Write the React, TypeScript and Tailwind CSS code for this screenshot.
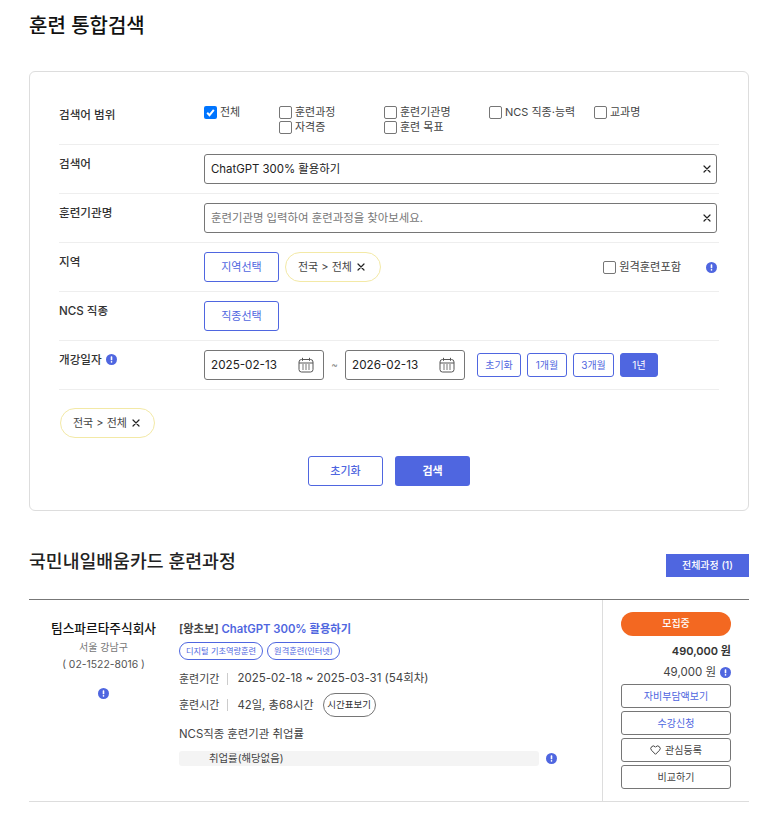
import React from "react";

const Info = ({ className = "" }: { className?: string }) => (
  <svg width="11" height="11" viewBox="0 0 11 11" className={className}>
    <circle cx="5.5" cy="5.5" r="5.5" fill="#4f66e0" />
    <rect x="4.7" y="2.3" width="1.6" height="4" rx="0.6" fill="#fff" />
    <rect x="4.7" y="7.1" width="1.6" height="1.6" rx="0.7" fill="#fff" />
  </svg>
);

const Cross = ({ size = 8 }: { size?: number }) => (
  <svg width={size} height={size} viewBox="0 0 8 8" className="shrink-0">
    <path d="M1 1l6 6M7 1L1 7" stroke="#222" strokeWidth="1.2" strokeLinecap="round" />
  </svg>
);

const Calendar = () => (
  <svg width="16" height="16" viewBox="0 0 16 16" fill="none" className="shrink-0">
    <rect x="1" y="2.5" width="14" height="12.5" rx="2.5" stroke="#555" strokeWidth="1" />
    <path d="M1 6h14" stroke="#555" strokeWidth="1" />
    <path d="M4.5 0.8v3M11.5 0.8v3" stroke="#555" strokeWidth="1" />
    <path d="M4 8h2M7 8h2M10 8h2M4 10h2M7 10h2M10 10h2M4 12h2M7 12h2M10 12h2" stroke="#777" strokeWidth="1" />
  </svg>
);

const Check = ({ label, on = false, textClass = "text-[11px]" }: { label: string; on?: boolean; textClass?: string }) => (
  <label className={`flex items-center gap-[3px] h-[15px] text-[#444] ${textClass}`}>
    {on ? (
      <span className="w-[13px] h-[13px] rounded-[2px] bg-[#0075ff] flex items-center justify-center shrink-0">
        <svg width="11" height="11" viewBox="0 0 10 10" fill="none">
          <path d="M2 5.2l2.1 2.2L8 2.6" stroke="#fff" strokeWidth="1.8" />
        </svg>
      </span>
    ) : (
      <span className="w-[13px] h-[13px] rounded-[2px] border border-[#767676] bg-white shrink-0" />
    )}
    <span className="whitespace-nowrap">{label}</span>
  </label>
);

const Row = ({ label, children }: { label: React.ReactNode; children: React.ReactNode }) => (
  <div className="flex h-[49px] border-b border-[#eeeeee] pt-[9px]">
    <div className="w-[145px] shrink-0 pt-[1px] text-[11.6px] leading-[18px] font-medium text-[#333] flex items-start gap-[4px]">{label}</div>
    <div className="flex-1 min-w-0">{children}</div>
  </div>
);

const OutlineBtn = ({ children, className = "" }: { children: React.ReactNode; className?: string }) => (
  <button className={`h-[30px] rounded-[3px] border border-[#4f66e0] bg-white text-[11px] text-[#4f66e0] ${className}`}>{children}</button>
);

const Chip = ({ className = "pr-[14px]" }: { className?: string }) => (
  <span className={`inline-flex items-center gap-[5px] h-[30px] pl-[12px] rounded-full border border-[#f3e9a6] bg-white text-[11px] text-[#444] ${className}`}>
    전국 &gt; 전체
    <Cross />
  </span>
);

const TextBox = ({ children }: { children: React.ReactNode }) => (
  <div className="w-[513px] h-[30px] rounded-[3px] border border-[#767676] flex items-center justify-between pl-[6px] pr-[5px]">
    {children}
    <Cross />
  </div>
);

const DateBox = ({ value }: { value: string }) => (
  <div className="w-[120px] h-[30px] rounded-[3px] border border-[#767676] flex items-center justify-between pl-[6px] pr-[9px] text-[11.7px] text-[#222]">
    <span className="pt-[1px]">{value}</span>
    <Calendar />
  </div>
);

const SmallBtn = ({ children, className = "" }: { children: React.ReactNode; className?: string }) => (
  <button className={`h-[24px] rounded-[3px] border border-[#4f66e0] text-[10px] ${className}`}>{children}</button>
);

const SideBtn = ({ children, className = "" }: { children: React.ReactNode; className?: string }) => (
  <button className={`w-[110px] h-[24px] rounded-[3px] border border-[#767676] bg-white text-[10px] flex items-center justify-center gap-[4px] ${className}`}>{children}</button>
);

export default function App() {
  return (
    <div className="w-[780px] h-[819px] overflow-hidden bg-white font-[Inter,'Noto_Sans_CJK_KR',sans-serif] text-[#222] px-[29px]">
      <h1 className="pt-[11px] h-[71px] text-[20px] leading-[30px] font-medium text-[#111]">훈련 통합검색</h1>

      <section className="w-[720px] h-[440px] rounded-[6px] border border-[#dddddd] px-[29px] pt-[23px] box-border">
        <div className="flex h-[50px] border-b border-[#eeeeee] pt-[10px]">
          <div className="w-[145px] shrink-0 pt-[1px] text-[11.6px] leading-[18px] font-medium text-[#333]">검색어 범위</div>
          <div className="grid grid-cols-[75px_105px_105px_105px_105px] grid-rows-[15px_15px]">
            <Check label="전체" on />
            <Check label="훈련과정" />
            <Check label="훈련기관명" />
            <Check label="NCS 직종·능력" />
            <Check label="교과명" />
            <span />
            <Check label="자격증" />
            <Check label="훈련 목표" />
          </div>
        </div>

        <Row label="검색어">
          <TextBox>
            <span className="pt-[1px] text-[11.4px] text-[#222]">ChatGPT 300% 활용하기</span>
          </TextBox>
        </Row>
        <Row label="훈련기관명">
          <TextBox>
            <span className="pt-[1px] text-[11.4px] text-[#777]">훈련기관명 입력하여 훈련과정을 찾아보세요.</span>
          </TextBox>
        </Row>
        <Row label="지역">
          <div className="flex items-center w-[513px]">
            <OutlineBtn className="w-[75px] mr-[6px]">지역선택</OutlineBtn>
            <Chip className="pr-[15px]" />
            <div className="ml-auto flex items-center">
              <Check label="원격훈련포함" textClass="text-[11.2px]" />
              <Info className="ml-[25px]" />
            </div>
          </div>
        </Row>
        <Row label="NCS 직종">
          <OutlineBtn className="w-[75px]">직종선택</OutlineBtn>
        </Row>
        <Row
          label={
            <>
              개강일자
              <Info className="mt-[3px]" />
            </>
          }
        >
          <div className="flex items-center">
            <DateBox value="2025-02-13" />
            <span className="w-[21px] -mt-[2px] text-center text-[10px] text-[#888]">~</span>
            <DateBox value="2026-02-13" />
            <div className="flex items-center gap-[6px] ml-[12px]">
              <SmallBtn className="w-[44px] text-[#4f66e0]">초기화</SmallBtn>
              <SmallBtn className="w-[40px] text-[#4f66e0]">1개월</SmallBtn>
              <SmallBtn className="w-[41px] text-[#4f66e0]">3개월</SmallBtn>
              <SmallBtn className="w-[38px] bg-[#4f66e0] text-white">1년</SmallBtn>
            </div>
          </div>
        </Row>

        <div className="pt-[18px] pl-[1px]">
          <Chip />
        </div>
        <div className="flex justify-center gap-[12px] mt-[18px]">
          <OutlineBtn className="w-[75px] font-medium">초기화</OutlineBtn>
          <button className="w-[75px] h-[30px] rounded-[3px] bg-[#4f66e0] text-[11px] font-semibold text-white">검색</button>
        </div>
      </section>

      <div className="flex justify-between items-start w-[720px] h-[89px] border-b border-[#777777] pt-[36px]">
        <h2 className="text-[18.3px] leading-[28px] font-medium text-[#222]">국민내일배움카드 훈련과정</h2>
        <button className="w-[83px] h-[23px] mt-[7px] bg-[#4f66e0] text-[10px] font-medium text-white">전체과정 (1)</button>
      </div>

      <article className="flex w-[720px] h-[202px] border-b border-[#dddddd]">
        <div className="w-[150px] shrink-0 flex flex-col items-center pt-[20px] pr-[1px]">
          <div className="text-[12.7px] leading-[18px] font-medium text-[#111]">팀스파르타주식회사</div>
          <div className="text-[10px] leading-[14px] mt-[2px] text-[#777]">서울 강남구</div>
          <div className="text-[10.4px] leading-[14px] mt-[4px] text-[#555]">( 02-1522-8016 )</div>
          <Info className="mt-[16px]" />
        </div>

        <div className="flex-1 min-w-0 pt-[20px]">
          <div className="text-[11.3px] leading-[18px] font-semibold text-[#444]">
            [왕초보] <span className="text-[#4f66e0]">ChatGPT 300% 활용하기</span>
          </div>
          <div className="flex gap-[4px] mt-[4px]">
            <span className="h-[18px] px-[6px] rounded-full border border-[#4f66e0] text-[8.2px] leading-[16px] text-[#4f66e0]">디지털 기초역량훈련</span>
            <span className="h-[18px] px-[6px] rounded-full border border-[#4f66e0] text-[8.2px] leading-[16px] text-[#4f66e0]">원격훈련(인터넷)</span>
          </div>
          <div className="flex items-center h-[18px] mt-[10px] text-[11px] text-[#444]">
            <span>훈련기간</span>
            <span className="w-px h-[12px] bg-[#ccc] ml-[8px] mr-[9px]" />
            <span className="text-[11.5px]">2025-02-18 ~ 2025-03-31 (54회차)</span>
          </div>
          <div className="flex items-center h-[24px] mt-[5px] text-[11px] text-[#444]">
            <span>훈련시간</span>
            <span className="w-px h-[12px] bg-[#ccc] ml-[8px] mr-[9px]" />
            <span className="text-[11.3px]">42일, 총68시간</span>
            <span className="ml-[9px] h-[24px] w-[53px] text-center rounded-full border border-[#767676] text-[9.5px] leading-[22px] text-[#333]">시간표보기</span>
          </div>
          <div className="text-[11.4px] leading-[18px] mt-[8px] text-[#444]">NCS직종 훈련기관 취업률</div>
          <div className="flex items-center mt-[8px]">
            <div className="w-[360px] h-[15px] rounded-[3px] bg-[#f4f4f4] pl-[30px] text-[10.4px] leading-[15px] text-[#444]">취업률(해당없음)</div>
            <Info className="ml-[7px]" />
          </div>
        </div>

        <div className="w-[147px] shrink-0 border-l border-[#dddddd] pl-[18px] pt-[12px]">
          <div className="w-[110px] h-[24px] rounded-full bg-[#f36821] text-[10px] font-medium leading-[22px] text-white text-center">모집중</div>
          <div className="w-[110px] text-right text-[11px] leading-[16px] font-semibold mt-[7px] text-[#333]">490,000 원</div>
          <div className="w-[110px] flex justify-end items-center gap-[4px] text-[11.5px] leading-[16px] mt-[5px] text-[#444]">
            49,000 원
            <Info />
          </div>
          <div className="flex flex-col gap-[3px] mt-[4px]">
            <SideBtn className="text-[#4f66e0]">자비부담액보기</SideBtn>
            <SideBtn className="text-[#4f66e0]">수강신청</SideBtn>
            <SideBtn className="text-[#444]">
              <svg width="11" height="10" viewBox="0 0 24 22" fill="none" stroke="#444" strokeWidth="2.2">
                <path d="M12 20.5 3.4 11.8a5.6 5.6 0 0 1 0-8 5.4 5.4 0 0 1 7.7 0l.9.9.9-.9a5.4 5.4 0 0 1 7.7 0 5.6 5.6 0 0 1 0 8z" />
              </svg>
              관심등록
            </SideBtn>
            <SideBtn className="text-[#444]">비교하기</SideBtn>
          </div>
        </div>
      </article>
    </div>
  );
}
